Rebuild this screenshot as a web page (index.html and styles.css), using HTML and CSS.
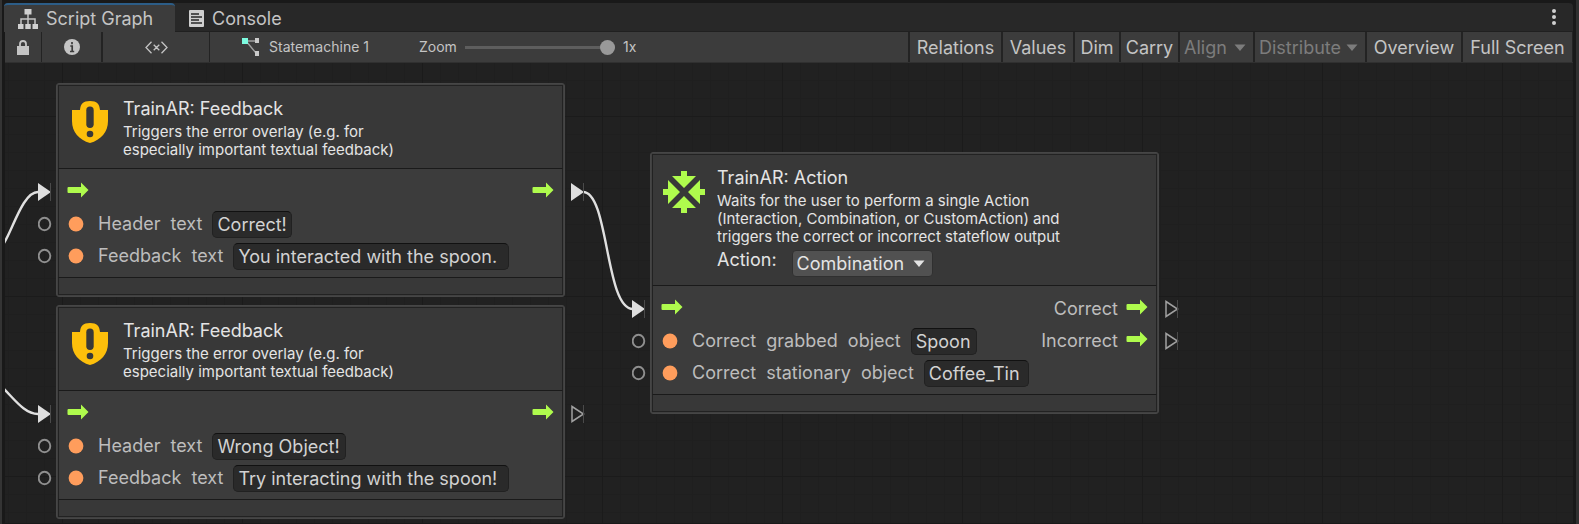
FILE: index.html
```html
<!DOCTYPE html>
<html lang="en">
<head>
<meta charset="utf-8">
<title>Script Graph</title>
<link rel="stylesheet" href="styles.css">
</head>
<body>
<svg class="defs" aria-hidden="true">
  <symbol id="flow" viewBox="0 0 22 16"><path d="M1.5 5H14V.5L21.500 8 14 15.500V11H1.500Q.5 11 .5 10V6Q.5 5 1.500 5Z" fill="#affb4d"/></symbol>
  <symbol id="port-on" viewBox="0 0 14 18"><path d="M0 0 13 9 0 18Z" fill="#dedede"/><path d="M12.500 0V18" stroke="#4a4a4a"/></symbol>
  <symbol id="port-off" viewBox="0 0 14 18"><path d="M1 1.500 12.500 9 1 16.500Z" fill="none" stroke="#a0a0a0" stroke-width="1.500"/><path d="M12.500 0V18" stroke="#4a4a4a"/></symbol>
  <symbol id="ring" viewBox="0 0 14 16"><ellipse cx="6.500" cy="8" rx="5.800" ry="6.300" fill="none" stroke="#8f8f8f" stroke-width="1.900"/></symbol>
  <symbol id="dot" viewBox="0 0 16 16"><circle cx="8" cy="8" r="7.400" fill="#ff9d5c"/></symbol>
  <symbol id="caret" viewBox="0 0 12 8"><path d="M.5 .5H11.500L6 7Z" fill="currentColor"/></symbol>
  <symbol id="shield" viewBox="0 0 36 42">
    <path d="M0 9H8C8.500 3 11 0 18 0S27.500 3 28 9H36V20C36 31 29 39 18 42 7 39 0 31 0 20Z" fill="#fdbf0b"/>
    <rect x="14.300" y="5.500" width="7.400" height="21.500" rx="3.700" fill="#383838"/><circle cx="18" cy="33" r="3.300" fill="#383838"/>
  </symbol>
  <symbol id="action" viewBox="0 0 42 42"><g fill="#affb4d">
    <path d="M18 0H24V5H33L21 17 9 5H18Z"/>
    <path d="M42 18V24H37V33L25 21 37 9V18Z"/>
    <path d="M24 42H18V37H9L21 25 33 37H24Z"/>
    <path d="M0 24V18H5V9L17 21 5 33V24Z"/>
  </g></symbol>
</svg>
<div class="window">
  <header class="tabs">
    <button class="tab tab-active" type="button">
      <svg width="20" height="20" viewBox="0 0 20 20"><path d="M10 4V15M3 15V10H17V15" fill="none" stroke="#c4c4c4" stroke-width="1.500"/><path d="M6.500 0H13.500V5.500H6.500ZM0 15H5.500V20H0ZM7.300 15H12.700V20H7.300ZM14.500 15H20V20H14.500Z" fill="#d0d0d0"/></svg>
      Script Graph
    </button>
    <button class="tab" type="button">
      <svg width="15" height="17" viewBox="0 0 15 17"><rect width="15" height="17" rx="1" fill="#cfcfcf"/><path d="M2 4H10M2 7H13M2 10H10M2 13H13" stroke="#282828" stroke-width="1.400"/></svg>
      Console
    </button>
    <button class="more" type="button" aria-label="More options"><svg width="4" height="16" viewBox="0 0 4 16" fill="#d0d0d0"><circle cx="2" cy="2" r="2"/><circle cx="2" cy="8" r="2"/><circle cx="2" cy="14" r="2"/></svg></button>
  </header>
  <div class="toolbar">
    <button class="tool lock" type="button" aria-label="Lock"><svg width="12" height="15" viewBox="0 0 12 15"><path d="M3 7V4Q3 1 6 1T9 4V7" fill="none" stroke="#c4c4c4" stroke-width="1.800"/><path d="M0 6H12V15H0Z" fill="#c4c4c4"/></svg></button>
    <button class="tool info" type="button" aria-label="Info"><svg width="16" height="16" viewBox="0 0 16 16"><circle cx="8" cy="8" r="8" fill="#c4c4c4"/><path d="M8 3V5.200M6.300 7H8.200V12.500M6 12.500H10.200" fill="none" stroke="#3c3c3c" stroke-width="1.700"/></svg></button>
    <button class="tool vars" type="button" aria-label="Variables"><svg width="23" height="13" viewBox="0 0 23 13"><path d="M6.500 .8 1 6.500 6.500 12.200M16.500 .8 22 6.500 16.500 12.200M8.700 3.700 14.300 9.300M14.300 3.700 8.700 9.300" fill="none" stroke="#c4c4c4" stroke-width="1.300"/></svg></button>
    <div class="crumb">
      <svg width="18" height="20" viewBox="0 0 18 20"><path d="M4 4H14M4 4 14 16" stroke="#a0a0a0" stroke-width="1.400"/><path d="M0 1H6V7H0Z" fill="#7dfbe0"/><path d="M13 1H17V6H13ZM13 14H17V19H13Z" fill="#cacaca"/></svg>
      Statemachine 1
    </div>
    <label class="zoom" for="zoom">Zoom</label>
    <input class="slider" id="zoom" type="range" min="0" max="1" step="0.1" value="1">
    <span class="factor">1x</span>
    <div class="actions">
      <button class="act relations" type="button">Relations</button>
      <button class="act values" type="button">Values</button>
      <button class="act dim" type="button">Dim</button>
      <button class="act carry" type="button">Carry</button>
      <div class="drop align"><select aria-label="Align" disabled><option>Align</option></select><svg width="12" height="8"><use href="#caret"/></svg></div>
      <div class="drop distribute"><select aria-label="Distribute" disabled><option>Distribute</option></select><svg width="12" height="8"><use href="#caret"/></svg></div>
      <button class="act overview" type="button">Overview</button>
      <button class="act full" type="button">Full Screen</button>
    </div>
  </div>
  <main class="canvas">
    <svg class="wires" fill="none" stroke="#e0e0e0" stroke-width="2.400">
      <path d="M-1 180C8 166 18 129 33 129"/>
      <path d="M-1 326C10 337 20 351 33 351"/>
      <path d="M578 129C604 129 600 246 628 246"/>
    </svg>

    <section class="node feedback-a">
      <div class="head">
        <svg width="36" height="42"><use href="#shield"/></svg>
        <div class="text"><h2>TrainAR: Feedback</h2><p>Triggers the error overlay (e.g. for<br>especially important textual feedback)</p></div>
      </div>
      <div class="body">
        <div class="row"><svg class="port in" width="14" height="18"><use href="#port-on"/></svg><svg class="flow" width="22" height="16"><use href="#flow"/></svg><svg class="flow end" width="22" height="16"><use href="#flow"/></svg><svg class="port out" width="14" height="18"><use href="#port-on"/></svg></div>
        <div class="row"><svg class="port in" width="14" height="16"><use href="#ring"/></svg><svg class="dot" width="16" height="16"><use href="#dot"/></svg><label for="h1">Header  text</label><input class="w-correct" id="h1" type="text" value="Correct!"></div>
        <div class="row"><svg class="port in" width="14" height="16"><use href="#ring"/></svg><svg class="dot" width="16" height="16"><use href="#dot"/></svg><label for="f1">Feedback  text</label><input class="w-message" id="f1" type="text" value="You interacted with the spoon."></div>
      </div>
      <div class="foot"></div>
    </section>

    <section class="node feedback-b">
      <div class="head">
        <svg width="36" height="42"><use href="#shield"/></svg>
        <div class="text"><h2>TrainAR: Feedback</h2><p>Triggers the error overlay (e.g. for<br>especially important textual feedback)</p></div>
      </div>
      <div class="body">
        <div class="row"><svg class="port in" width="14" height="18"><use href="#port-on"/></svg><svg class="flow" width="22" height="16"><use href="#flow"/></svg><svg class="flow end" width="22" height="16"><use href="#flow"/></svg><svg class="port out" width="14" height="18"><use href="#port-off"/></svg></div>
        <div class="row"><svg class="port in" width="14" height="16"><use href="#ring"/></svg><svg class="dot" width="16" height="16"><use href="#dot"/></svg><label for="h2">Header  text</label><input class="w-wrong" id="h2" type="text" value="Wrong Object!"></div>
        <div class="row"><svg class="port in" width="14" height="16"><use href="#ring"/></svg><svg class="dot" width="16" height="16"><use href="#dot"/></svg><label for="f2">Feedback  text</label><input class="w-message" id="f2" type="text" value="Try interacting with the spoon!"></div>
      </div>
      <div class="foot"></div>
    </section>

    <section class="node action-node">
      <div class="head">
        <svg width="42" height="42"><use href="#action"/></svg>
        <div class="text"><h2>TrainAR: Action</h2><p>Waits for the user to perform a single Action<br>(Interaction, Combination, or CustomAction) and<br>triggers the correct or incorrect stateflow output</p>
          <div class="choice"><label for="kind">Action:</label><div class="drop kind"><select id="kind"><option>Combination</option></select><svg width="12" height="8"><use href="#caret"/></svg></div></div>
        </div>
      </div>
      <div class="body">
        <div class="row"><svg class="port in" width="14" height="18"><use href="#port-on"/></svg><svg class="flow" width="22" height="16"><use href="#flow"/></svg><span class="result end">Correct</span><svg class="flow" width="22" height="16"><use href="#flow"/></svg><svg class="port out" width="14" height="18"><use href="#port-off"/></svg></div>
        <div class="row"><svg class="port in" width="14" height="16"><use href="#ring"/></svg><svg class="dot" width="16" height="16"><use href="#dot"/></svg><label for="g">Correct  grabbed  object</label><input class="w-spoon" id="g" type="text" value="Spoon"><span class="result end">Incorrect</span><svg class="flow" width="22" height="16"><use href="#flow"/></svg><svg class="port out" width="14" height="18"><use href="#port-off"/></svg></div>
        <div class="row"><svg class="port in" width="14" height="16"><use href="#ring"/></svg><svg class="dot" width="16" height="16"><use href="#dot"/></svg><label for="s">Correct  stationary  object</label><input class="w-tin" id="s" type="text" value="Coffee_Tin"></div>
      </div>
      <div class="foot"></div>
    </section>
  </main>
</div>
</body>
</html>
```

FILE: styles.css
```css
* { box-sizing: border-box; }

body {
  margin: 0;
  height: 100vh;
  padding: 3px 3px 1px 2px;
  background: #191919;
  border: solid #343434;
  border-width: 0 3px 0 2px;
  border-right-color: #303030;
  color: #c4c4c4;
  font: 18px/24px Inter, "Liberation Sans", sans-serif;
  overflow: hidden;
}

svg { flex: none; display: block; }
.defs { position: absolute; width: 0; height: 0; }

button, input, select {
  margin: 0;
  border: 0;
  border-radius: 0;
  background: none;
  color: inherit;
  font: inherit;
}

.window { display: flex; flex-direction: column; height: 100%; }

.tabs {
  display: flex;
  flex: none;
  height: 29px;
  background: #282828;
  border-bottom: 1px solid #202020;
  border-radius: 4px 4px 0 0;
}

.tab {
  display: flex;
  align-items: center;
  gap: 8px;
  height: 29px;
  padding: 2px 14px 0;
  white-space: nowrap;
}

.tab-active {
  width: 171px;
  padding-top: 0;
  background: #3c3c3c;
  border-top: 2px solid #2c5d87;
  border-radius: 4px 4px 0 0;
}

.more { margin-left: auto; padding: 0 17px; }

.toolbar {
  display: flex;
  flex: none;
  align-items: center;
  height: 31px;
  margin-left: 1px;
  background: #3c3c3c;
  border-bottom: 1px solid #303030;
  font-size: 14px;
}

.tool {
  display: flex;
  align-items: center;
  justify-content: center;
  height: 30px;
  padding: 0;
  border-right: 1px solid #232323;
}

.lock { width: 37px; }
.info { width: 61px; border-right-width: 2px; }
.vars { width: 107px; }

.crumb { display: flex; align-items: center; gap: 9px; width: 209px; padding-left: 32px; white-space: nowrap; }
.zoom { width: 46px; }

.slider { width: 150px; height: 16px; appearance: none; }
.slider::-webkit-slider-runnable-track { height: 3px; background: #5e5e5e; }
.slider::-webkit-slider-thumb {
  appearance: none;
  width: 15px;
  height: 15px;
  margin-top: -6px;
  border-radius: 50%;
  background: #999;
}

.factor { margin-left: 8px; }

.actions { display: flex; margin-left: auto; font-size: 18px; }

.act, .actions .drop {
  height: 30px;
  padding: 2px 0 0;
  border-left: 2px solid #232323;
  text-align: center;
  white-space: nowrap;
}

.actions .drop { color: #7c7c7c; }
.relations { width: 93px; }
.values { width: 72px; }
.dim { width: 46px; }
.carry { width: 59px; }
.align { width: 75px; }
.distribute { width: 112px; }
.overview { width: 96px; }
.full { width: 112px; border-right: 1px solid #232323; }

.drop { position: relative; display: flex; align-items: center; }
.drop select { width: 100%; height: 100%; padding: 0 4px; appearance: none; opacity: 1; }
.drop svg { position: absolute; right: 7px; pointer-events: none; }

.canvas {
  position: relative;
  flex: 1;
  margin-left: 1px;
  overflow: hidden;
  background-color: #212121;
  background-image:
    linear-gradient(90deg, #1b1b1b 1px, transparent 1px),
    linear-gradient(#1b1b1b 1px, transparent 1px),
    linear-gradient(90deg, #1f1f1f 1px, transparent 1px),
    linear-gradient(#1f1f1f 1px, transparent 1px);
  background-size: 180px 180px, 180px 180px, 18px 18px, 18px 18px;
  background-position: 57px 53px, 57px 53px, 3px 17px, 3px 17px;
}

.wires { position: absolute; inset: 0; width: 100%; height: 100%; }

.node {
  position: absolute;
  width: 509px;
  padding: 1px;
  border: 1px solid #464646;
  border-radius: 3px;
  background: #404040;
}

.feedback-a { left: 51px; top: 20px; }
.feedback-b { left: 51px; top: 242px; }
.action-node { left: 645px; top: 89px; }

.head, .body, .foot { border: solid #222; border-width: 1px 1px 0; }

.head {
  display: flex;
  gap: 15px;
  padding: 15px 13px 7px;
  background: #383838;
  color: #e4e4e4;
}

.action-node .head { gap: 12px; padding: 16px 10px 8px; }
.text { flex: 1; min-width: 0; margin-top: -2px; padding-bottom: 2px; }
.action-node .text { margin-top: -3px; padding-bottom: 0; }
h2 { margin: 0; font-size: 18px; line-height: 20px; font-weight: 400; }
p { margin: 4px 0 0; font-size: 15px; line-height: 18px; white-space: nowrap; }

.choice { display: flex; gap: 15px; margin-top: 4px; }
.choice label { line-height: 20px; }
.kind { width: 141px; height: 27px; border: 1px solid #303030; border-radius: 4px; background: #515151; }
.kind select { padding: 0 4px; }

.body {
  display: grid;
  grid-auto-rows: 32px;
  padding: 7px 8px 5px;
  border-top-color: #1a1a1a;
  background: #3c3c3c;
}

.row { position: relative; display: flex; align-items: center; white-space: pre; }
.row label { margin: 0 10px 0 14px; color: #bdbdbd; }
.row .flow { margin-bottom: 4px; }
.row .dot { margin-left: 1px; }
.row .end { margin-left: auto; }
.result { margin-right: 8px; color: #bdbdbd; }

.row input {
  height: 27px;
  padding: 0 4px;
  border: 1px solid #212121;
  border-top-color: #111;
  border-radius: 5px;
  background: #2a2a2a;
  color: #d2d2d2;
}

.w-correct { width: 80px; }
.w-wrong { width: 134px; }
.w-message { width: 276px; }
.w-spoon { width: 66px; }
.w-tin { width: 105px; }

.port { position: absolute; }
.port.in { left: -29px; }
.port.out { right: -31px; }

.foot { height: 18px; border-bottom-width: 1px; border-top-color: #1a1a1a; background: #383838; }
```
